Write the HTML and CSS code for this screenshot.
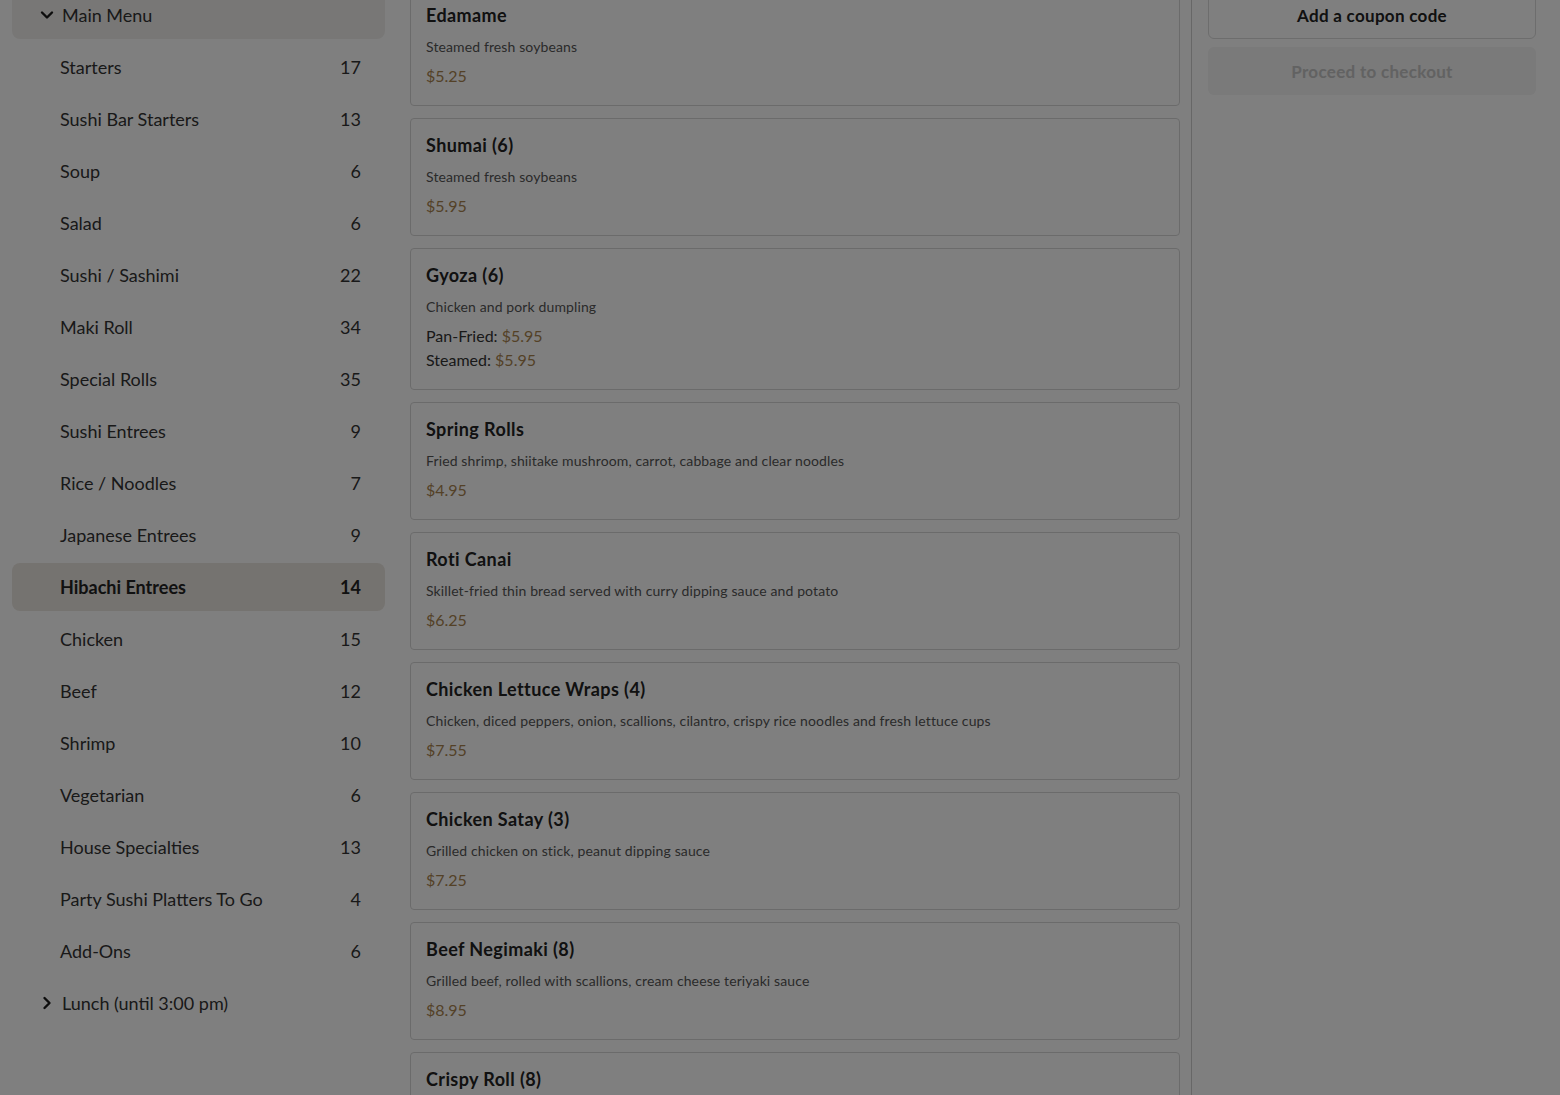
FILE: index.html
```html
<!DOCTYPE html>
<html lang="en">
<head>
<meta charset="utf-8">
<title>Menu</title>
<link rel="stylesheet" href="styles.css">
</head>
<body>
<div class="layout">
  <aside class="sidebar">
    <div class="group-head open">
      <svg class="chev" width="14" height="14" viewBox="0 0 14 14"><path d="M2 4.5 L7 9.5 L12 4.5" fill="none" stroke="#1a1a1a" stroke-width="2.4" stroke-linecap="round" stroke-linejoin="round"/></svg>
      <span>Main Menu</span>
    </div>
    <ul class="cats">
      <li class="cat"><span>Starters</span><span>17</span></li>
      <li class="cat"><span>Sushi Bar Starters</span><span>13</span></li>
      <li class="cat"><span>Soup</span><span>6</span></li>
      <li class="cat"><span>Salad</span><span>6</span></li>
      <li class="cat"><span>Sushi / Sashimi</span><span>22</span></li>
      <li class="cat"><span>Maki Roll</span><span>34</span></li>
      <li class="cat"><span>Special Rolls</span><span>35</span></li>
      <li class="cat"><span>Sushi Entrees</span><span>9</span></li>
      <li class="cat"><span>Rice / Noodles</span><span>7</span></li>
      <li class="cat"><span>Japanese Entrees</span><span>9</span></li>
      <li class="cat active"><span>Hibachi Entrees</span><span>14</span></li>
      <li class="cat"><span>Chicken</span><span>15</span></li>
      <li class="cat"><span>Beef</span><span>12</span></li>
      <li class="cat"><span>Shrimp</span><span>10</span></li>
      <li class="cat"><span>Vegetarian</span><span>6</span></li>
      <li class="cat"><span>House Specialties</span><span>13</span></li>
      <li class="cat"><span>Party Sushi Platters To Go</span><span>4</span></li>
      <li class="cat"><span>Add-Ons</span><span>6</span></li>
    </ul>
    <div class="group-head">
      <svg class="chev" width="14" height="14" viewBox="0 0 14 14"><path d="M4.5 2 L9.5 7 L4.5 12" fill="none" stroke="#1a1a1a" stroke-width="2.4" stroke-linecap="round" stroke-linejoin="round"/></svg>
      <span>Lunch (until 3:00 pm)</span>
    </div>
  </aside>

  <main class="items">
    <div class="card">
      <h3>Edamame</h3>
      <p class="desc">Steamed fresh soybeans</p>
      <div class="prices"><div class="price">$5.25</div></div>
    </div>
    <div class="card">
      <h3>Shumai (6)</h3>
      <p class="desc">Steamed fresh soybeans</p>
      <div class="prices"><div class="price">$5.95</div></div>
    </div>
    <div class="card">
      <h3>Gyoza (6)</h3>
      <p class="desc">Chicken and pork dumpling</p>
      <div class="prices">
        <div>Pan-Fried: <span class="price">$5.95</span></div>
        <div>Steamed: <span class="price">$5.95</span></div>
      </div>
    </div>
    <div class="card">
      <h3>Spring Rolls</h3>
      <p class="desc">Fried shrimp, shiitake mushroom, carrot, cabbage and clear noodles</p>
      <div class="prices"><div class="price">$4.95</div></div>
    </div>
    <div class="card">
      <h3>Roti Canai</h3>
      <p class="desc">Skillet-fried thin bread served with curry dipping sauce and potato</p>
      <div class="prices"><div class="price">$6.25</div></div>
    </div>
    <div class="card">
      <h3>Chicken Lettuce Wraps (4)</h3>
      <p class="desc">Chicken, diced peppers, onion, scallions, cilantro, crispy rice noodles and fresh lettuce cups</p>
      <div class="prices"><div class="price">$7.55</div></div>
    </div>
    <div class="card">
      <h3>Chicken Satay (3)</h3>
      <p class="desc">Grilled chicken on stick, peanut dipping sauce</p>
      <div class="prices"><div class="price">$7.25</div></div>
    </div>
    <div class="card">
      <h3>Beef Negimaki (8)</h3>
      <p class="desc">Grilled beef, rolled with scallions, cream cheese teriyaki sauce</p>
      <div class="prices"><div class="price">$8.95</div></div>
    </div>
    <div class="card">
      <h3>Crispy Roll (8)</h3>
    </div>
  </main>

  <aside class="cart">
    <button class="btn coupon">Add a coupon code</button>
    <button class="btn checkout">Proceed to checkout</button>
  </aside>
</div>
<div class="overlay"></div>
</body>
</html>
```

FILE: styles.css
```css
* { box-sizing: border-box; }
html, body { margin: 0; padding: 0; height: 100%; overflow: hidden; }
body {
  font-family: "Lato", "Noto Sans", sans-serif;
  color: #333;
  background: #fff;
}
.layout {
  display: grid;
  grid-template-columns: 397px 794px 1fr;
  margin-top: -12px;
  height: 1120px;
}
.sidebar {
  padding: 3px 12px 0 12px;
}
.group-head {
  display: flex;
  align-items: center;
  gap: 8px;
  height: 48px;
  padding-left: 28px;
  font-size: 18px;
  color: #333;
  border-radius: 8px;
}
.group-head.open { background: #f1efed; }
.chev { flex: none; }
.cats {
  list-style: none;
  margin: 4px 0 4px;
  padding: 0;
  display: flex;
  flex-direction: column;
  gap: 4px;
}
.cat {
  display: flex;
  justify-content: space-between;
  align-items: center;
  height: 48px;
  padding: 0 24px 0 48px;
  font-size: 18px;
  color: #333;
  border-radius: 8px;
}
.cat.active {
  background: #ebe6e1;
  font-weight: 700;
  color: #222;
}
.items {
  padding: 0 11px 0 13px;
  display: flex;
  flex-direction: column;
  gap: 12px;
}
.card {
  border: 1px solid #d6d6d6;
  border-radius: 4px;
  padding: 15px 15px 17px;
}
.card h3 {
  margin: 0;
  font-size: 18px;
  line-height: 22px;
  font-weight: 700;
  letter-spacing: 0.4px;
  color: #222;
}
.desc {
  margin: 11px 0 0;
  font-size: 14px;
  line-height: 20px;
  letter-spacing: 0.12px;
  color: #555;
}
.prices {
  margin-top: 7px;
  font-size: 16px;
  line-height: 24px;
  color: #333;
}
.price { color: #a8834e; }
.cart {
  border-left: 1px solid #cfcfcf;
  padding: 3px 24px 0 16px;
  display: flex;
  flex-direction: column;
  gap: 8px;
}
.btn {
  width: 328px;
  height: 48px;
  font-family: inherit;
  font-size: 17px;
  font-weight: 700;
  letter-spacing: 0.3px;
  border-radius: 6px;
}
.coupon {
  background: #fff;
  border: 1px solid #dadada;
  color: #222;
}
.checkout {
  background: #f4f4f4;
  border: none;
  color: #c4c4c4;
}
.overlay {
  position: fixed;
  inset: 0;
  background: rgba(0, 0, 0, 0.5);
}
```
